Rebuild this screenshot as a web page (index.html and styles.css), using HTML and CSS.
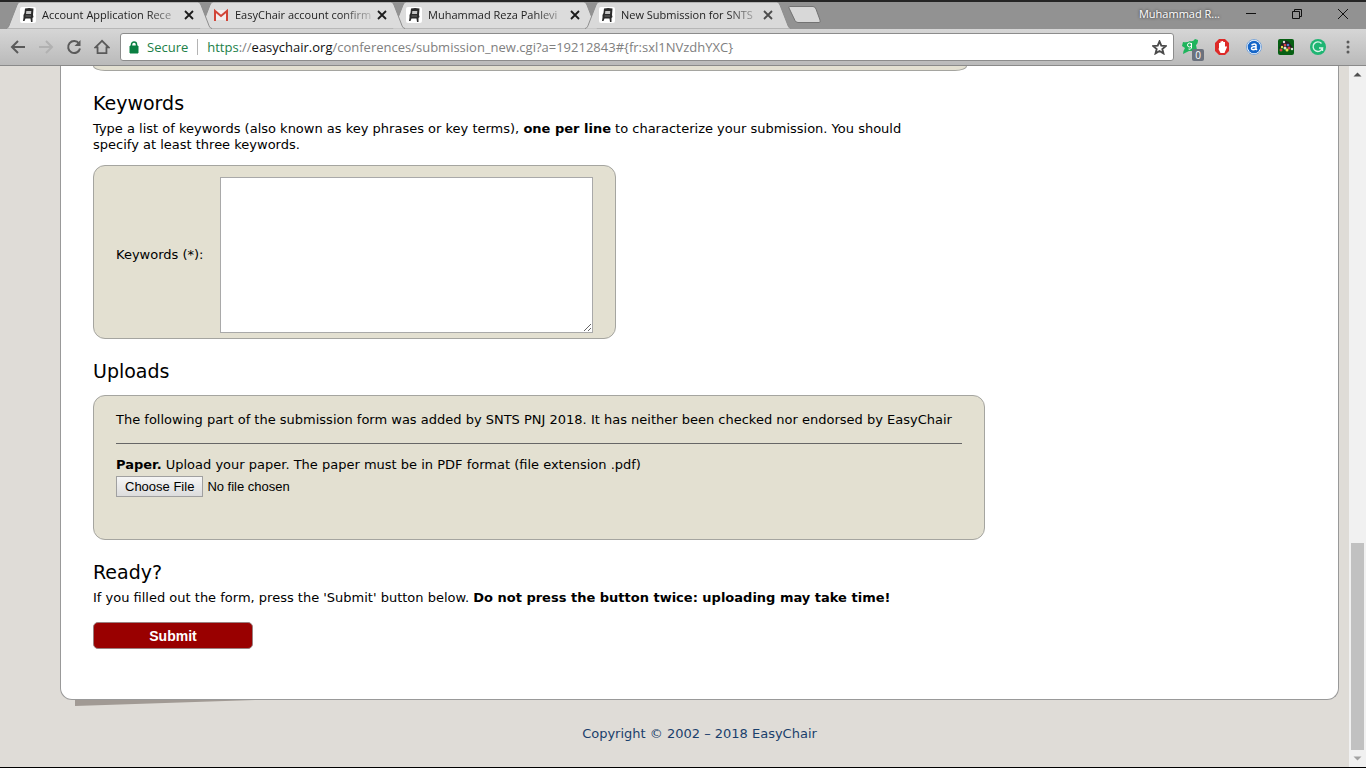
FILE: index.html
```html
<!DOCTYPE html>
<html lang="en">
<head>
<meta charset="utf-8">
<title>New Submission for SNTS PNJ 2018</title>
<link rel="stylesheet" href="styles.css">
</head>
<body>
<svg class="defs" aria-hidden="true">
  <symbol id="chair" viewBox="0 0 16 16">
    <rect width="16" height="16" rx="2" fill="#fff"/>
    <path d="M5 1.500q4-1 8.500 0L13 8l.5 2-1 1v4H11l-.5-3.500h-5L4.500 14H3l.5-3.500V8L4.500 6z" fill="#2b2b2b"/>
    <path d="M6.300 4h5l-.3 3H6z" fill="#c4c4c4"/>
    <path d="M5.500 9h5.500" stroke="#888" stroke-width=".7"/>
  </symbol>
  <symbol id="tabshape" viewBox="0 0 206 27">
    <path d="M0 26.500C2 26.500 3 24 4 21L11 3Q12 0 14 0H192Q194 0 195 3L202 21C203 24 204 26.500 206 26.500" stroke="#8e8e8e"/>
  </symbol>
  <symbol id="cross" viewBox="0 0 10 10"><path d="M1 1l8 8M9 1L1 9" stroke="currentColor" stroke-width="1.800"/></symbol>
</svg>
<header class="browser">
  <div class="titlebar">
    <nav class="tabs" aria-label="Tabs">
      <div class="tab"><svg class="tab-bg"><use href="#tabshape"/></svg><svg class="fav"><use href="#chair"/></svg><span class="tab-title">Account Application Rece</span><button class="close" aria-label="Close tab"><svg><use href="#cross"/></svg></button></div>
      <div class="tab"><svg class="tab-bg"><use href="#tabshape"/></svg><svg class="fav" viewBox="0 0 16 16"><path d="M2 3h12v10H2z" fill="#f3eeee"/><path d="M2 14V4l6 5 6-5v10" fill="none" stroke="#d24538" stroke-width="2"/></svg><span class="tab-title">EasyChair account confirm</span><button class="close" aria-label="Close tab"><svg><use href="#cross"/></svg></button></div>
      <div class="tab"><svg class="tab-bg"><use href="#tabshape"/></svg><svg class="fav"><use href="#chair"/></svg><span class="tab-title">Muhammad Reza Pahlevi</span><button class="close" aria-label="Close tab"><svg><use href="#cross"/></svg></button></div>
      <div class="tab active"><svg class="tab-bg"><use href="#tabshape"/></svg><svg class="fav"><use href="#chair"/></svg><span class="tab-title">New Submission for SNTS</span><button class="close" aria-label="Close tab"><svg><use href="#cross"/></svg></button></div>
    </nav>
    <button class="newtab" aria-label="New tab"><svg width="36" height="20" viewBox="0 0 36 20"><path d="M2.500 1.500H26Q28 1.500 29 4L33 15Q34 17.500 32 17.500H11Q9 17.500 8 15.500L2 3Q1.500 1.500 2.500 1.500z" fill="#d8d8d8" stroke="#737373"/></svg></button>
    <span class="user">Muhammad R...</span>
    <div class="window-buttons">
      <button aria-label="Minimize"><svg width="12" height="12" viewBox="0 0 12 12"><path d="M1 5.500h10"/></svg></button>
      <button aria-label="Restore"><svg width="12" height="12" viewBox="0 0 12 12"><path d="M1.500 3.500h7v7h-7zM3.500 3.500v-2h7v7h-2"/></svg></button>
      <button aria-label="Close"><svg width="12" height="12" viewBox="0 0 12 12"><path d="M1 1l10 10M11 1L1 11"/></svg></button>
    </div>
  </div>
  <div class="toolbar">
    <button aria-label="Back"><svg viewBox="0 0 16 16"><path d="M15 8H2M8 2L2 8l6 6"/></svg></button>
    <button class="off" aria-label="Forward"><svg viewBox="0 0 16 16"><path d="M1 8h13M8 2l6 6-6 6"/></svg></button>
    <button aria-label="Reload"><svg viewBox="0 0 16 16"><path d="M13 4.500A6 6 0 1 0 14 9.500"/><path d="M14.500 1v6h-6z" fill="#5a5a5a" stroke="none"/></svg></button>
    <button aria-label="Home"><svg viewBox="0 0 18 16"><path d="M9 1L1.500 8.500H4V15h10V8.500h2.500z"/></svg></button>
    <div class="omnibox">
      <svg width="10" height="13" viewBox="0 0 10 13"><path d="M1 5h8v7H1z" fill="#0b8043" stroke="#0b8043"/><path d="M2.500 5V3.500a2.500 2.500 0 0 1 5 0V5" fill="none" stroke="#0b8043" stroke-width="1.500"/></svg>
      <span class="secure">Secure</span>
      <span class="url"><span class="scheme">https</span>://<span class="host">easychair.org</span>/conferences/submission_new.cgi?a=19212843#{fr:sxl1NVzdhYXC}</span>
      <button class="star" aria-label="Bookmark this page"><svg viewBox="0 0 16 16"><path d="M8 1.500l1.900 4.600 4.800.400-3.700 3.100 1.200 4.700L8 11.800l-4.200 2.500L5 9.600 1.300 6.500l4.800-.400z"/></svg></button>
    </div>
    <div class="extensions">
      <button aria-label="Downloads extension"><svg viewBox="0 0 16 16"><path d="M1 3q4 1 7-1 3 1 5-2l3 1q0 4-2 5l1 5-3 1-5 0-6 3q0-3 2-6L0 7z" fill="#1fb45c"/><circle cx="7.500" cy="6" r="2" fill="none" stroke="#fff"/><path d="M9.500 4v5q-1 2-3 1" fill="none" stroke="#fff"/></svg><span class="badge">0</span></button>
      <button aria-label="Ad blocker"><svg viewBox="0 0 16 16"><path d="M5 0h6l4 4v8l-4 4H5l-4-4V4z" fill="#dd2a28"/><path d="M5 9V4h1.400V2.500h1.300V2h1.500v1H11v5l1-1 1 1-2.500 6H6.500L4.500 10z" fill="#fff"/></svg></button>
      <button aria-label="Search extension"><svg viewBox="0 0 16 16"><circle cx="8" cy="8" r="7.500" fill="#fff" stroke="#7aa5d8"/><circle cx="8" cy="8" r="6.300" fill="#1566c8"/><path d="M5.500 6q4-2 4.500 0v4l1 1M10 7.500q-4.500 0-4.500 2t4.500.500" fill="none" stroke="#fff" stroke-width="1.500"/></svg></button>
      <button aria-label="Game extension"><svg viewBox="0 0 16 16"><rect width="16" height="16" rx="2" fill="#075f13"/><path d="M3 5l3-4 5 2 4 6H1z" fill="#222"/><g fill="#db3b46"><circle cx="7" cy="6" r="1.300"/><circle cx="11" cy="9" r="1.500"/><circle cx="3" cy="11" r="1.500"/></g><g fill="#e8e04a"><circle cx="4" cy="8" r="1.200"/><circle cx="9" cy="11" r="1.500"/></g><g fill="#ddd"><circle cx="6" cy="3" r="1.200"/><circle cx="7" cy="9" r="1.500"/><circle cx="14" cy="10" r="1.200"/></g><circle cx="10" cy="6" r="1.300" fill="#5577cc"/></svg></button>
      <button aria-label="Writing extension"><svg viewBox="0 0 16 16"><circle cx="8" cy="8" r="8" fill="#1fb573"/><path d="M11.500 4.500A4.800 4.800 0 1 0 12.500 9H9M12.500 9v3" fill="none" stroke="#d9f4e9" stroke-width="1.400"/></svg></button>
      <button class="menu" aria-label="Menu"><svg viewBox="0 0 4 14"><circle cx="2" cy="2" r="1.500"/><circle cx="2" cy="7" r="1.500"/><circle cx="2" cy="12" r="1.500"/></svg></button>
    </div>
  </div>
</header>
<div class="viewport">
  <div class="page">
    <main class="sheet">
      <div class="panel-end"></div>
      <form>
        <section>
          <h2>Keywords</h2>
          <p>Type a list of keywords (also known as key phrases or key terms), <b>one per line</b> to characterize your submission. You should specify at least three keywords.</p>
          <div class="panel keywords"><label for="kw">Keywords (*):</label><textarea id="kw"></textarea></div>
        </section>
        <section>
          <h2>Uploads</h2>
          <div class="panel uploads">
            <div class="notice">The following part of the submission form was added by SNTS PNJ 2018. It has neither been checked nor endorsed by EasyChair</div>
            <label for="paper"><b>Paper.</b> Upload your paper. The paper must be in PDF format (file extension .pdf)</label>
            <input id="paper" type="file">
          </div>
        </section>
        <section>
          <h2>Ready?</h2>
          <p>If you filled out the form, press the 'Submit' button below. <b>Do not press the button twice: uploading may take time!</b></p>
          <button class="submit" type="button">Submit</button>
        </section>
      </form>
    </main>
    <svg class="shadow" viewBox="0 0 180 6" aria-hidden="true"><path d="M0 0H180L0 6z"/></svg>
    <footer><a href="#">Copyright © 2002 – 2018 EasyChair</a></footer>
  </div>
  <div class="scrollbar" aria-hidden="true">
    <svg viewBox="0 0 17 17"><path d="M4.500 10.500h8l-4-4z" fill="#505050"/></svg>
    <div class="thumb"></div>
    <svg viewBox="0 0 17 17"><path d="M4.500 6.500h8l-4 4z" fill="#a3a3a3"/></svg>
  </div>
</div>
</body>
</html>
```

FILE: styles.css
```css
* { box-sizing: border-box; }
body {
  margin: 0;
  height: 100vh;
  display: flex;
  flex-direction: column;
  overflow: hidden;
  border-bottom: 1px solid #000;
  font: 13px/16px Verdana, "DejaVu Sans", sans-serif;
  color: #000;
}
button { border: 0; padding: 0; background: none; font: inherit; color: inherit; }
svg { display: block; flex: none; }
.defs { position: absolute; width: 0; height: 0; }

.browser { flex: none; font: 11px/16px "Segoe UI", "Open Sans", sans-serif; }
.titlebar {
  display: flex;
  height: 29px;
  border-top: 2px solid #252525;
  background: #929292;
}
.tabs { display: flex; padding-left: 6px; }
.tab {
  position: relative;
  display: flex;
  align-items: center;
  width: 206px;
  height: 27px;
  margin-right: -13px;
  padding: 0 18px 1px 14px;
}
.tab:nth-child(1) { z-index: 3; }
.tab:nth-child(2) { z-index: 2; }
.tab:nth-child(3) { z-index: 1; }
.tab.active { z-index: 4; }
.tab-bg { position: absolute; z-index: -1; left: 0; top: 0; width: 206px; height: 27px; fill: #dcdcdc; }
.active .tab-bg { fill: #d9d9d9; }
.fav { width: 16px; height: 16px; margin-right: 6px; }
.tab-title {
  flex: 1;
  overflow: hidden;
  white-space: nowrap;
  color: #222;
  -webkit-mask-image: linear-gradient(90deg, #000 78%, rgba(0, 0, 0, .2));
  mask-image: linear-gradient(90deg, #000 78%, rgba(0, 0, 0, .2));
}
.close { margin-left: 6px; color: #1c1c1c; }
.close svg { width: 10px; height: 10px; }
.active .close { color: #4c4c4c; }
.newtab { margin-left: 9px; height: 25px; }
.user { margin-left: auto; padding: 4px 0; color: #fff; text-shadow: 0 0 3px #222; }
.window-buttons { display: flex; margin-left: 8px; }
.window-buttons button { display: flex; align-items: center; justify-content: center; width: 46px; height: 23px; }
.window-buttons path { fill: none; stroke: #111; }

.toolbar {
  display: flex;
  align-items: center;
  height: 37px;
  padding: 0 16px 0 10px;
  border-bottom: 1px solid #8a8a8a;
  background: linear-gradient(#d6d6d6, #bababa);
}
.toolbar > button { margin-right: 12px; }
.toolbar > button svg { width: 16px; height: 16px; fill: none; stroke: #5a5a5a; stroke-width: 2; }
.toolbar > .off svg { stroke: #b1b1b1; }
.omnibox {
  flex: 1;
  display: flex;
  align-items: center;
  height: 28px;
  margin-left: -2px;
  padding: 0 6px 0 8px;
  border: 1px solid #8c8c8c;
  border-radius: 3px;
  background: #fff;
  font-size: 13px;
}
.secure { margin-left: 8px; padding-right: 9px; border-right: 1px solid #b4b4b4; color: #218048; }
.url { margin-left: 9px; color: #808080; }
.scheme { color: #218048; }
.host { color: #111; }
.star { margin-left: auto; }
.star svg { width: 15px; height: 15px; fill: none; stroke: #4a4a4a; stroke-width: 2; }
.extensions { display: flex; align-items: center; gap: 16px; margin-left: 8px; }
.extensions button { position: relative; }
.extensions svg { width: 16px; height: 16px; }
.extensions .menu { margin-left: 4px; }
.extensions .menu svg { width: 4px; height: 14px; fill: #5a5a5a; }
.badge {
  position: absolute;
  left: 10px;
  top: 10px;
  width: 12px;
  border-radius: 2px;
  background: #6b717d;
  color: #fff;
  font-size: 10px;
  line-height: 12px;
}

.viewport { flex: 1; display: flex; min-height: 0; }
.page { flex: 1; padding: 0 10px 0 60px; background: #dfdcd7; }
.sheet {
  padding: 0 32px 50px;
  border: 1px solid #999;
  border-top: 0;
  border-radius: 0 0 12px 12px;
  background: #fff;
}
.panel-end {
  max-width: 874px;
  height: 5px;
  border: 1px solid #a5a5a0;
  border-top: 0;
  border-radius: 0 0 12px 12px / 0 0 5px 5px;
  background: #e3e0d1;
}
h2 { margin: 20px 0 6px; font-size: 19px; line-height: 24px; font-weight: normal; }
p { margin: 0 0 12px; max-width: 840px; }
.panel { border: 1px solid #a5a5a0; border-radius: 12px; background: #e3e0d1; }
.keywords { display: flex; align-items: center; width: fit-content; padding: 11px 22px 5px; }
.keywords label { min-width: 94px; }
.keywords textarea { width: 373px; height: 156px; margin-left: 10px; border: 1px solid #a9a9a9; background: #fff; }
.uploads { max-width: 892px; margin-top: 12px; padding: 16px 22px 42px; }
.notice { margin-bottom: 13px; padding-bottom: 15px; border-bottom: 1px solid #666; }
.uploads label { display: block; }
.uploads input { display: block; margin-top: 3px; font: 13px/16px Arial, "Liberation Sans", sans-serif; }
.uploads input::file-selector-button {
  height: 21px;
  margin-right: 4px;
  padding: 0 8px;
  border: 1px solid #a0a0a0;
  background: linear-gradient(#f6f6f6, #dcdcdc);
  font: inherit;
}
.submit {
  display: block;
  width: 160px;
  height: 27px;
  margin-top: 16px;
  border: 1px solid #9b8080;
  border-radius: 5px;
  background: #900;
  color: #fff;
  font: bold 14px/16px Arial, "Liberation Sans", sans-serif;
}
.shadow { width: 180px; height: 6px; margin-left: 15px; fill: #a19a94; }
footer { padding-top: 20px; text-align: center; }
footer a { color: #1a3f6c; text-decoration: none; }
.scrollbar { display: flex; flex-direction: column; width: 17px; background: #f1f1f1; }
.scrollbar svg { width: 17px; height: 17px; }
.thumb { height: 207px; margin: auto 2px 0; background: #c1c1c1; }
```
